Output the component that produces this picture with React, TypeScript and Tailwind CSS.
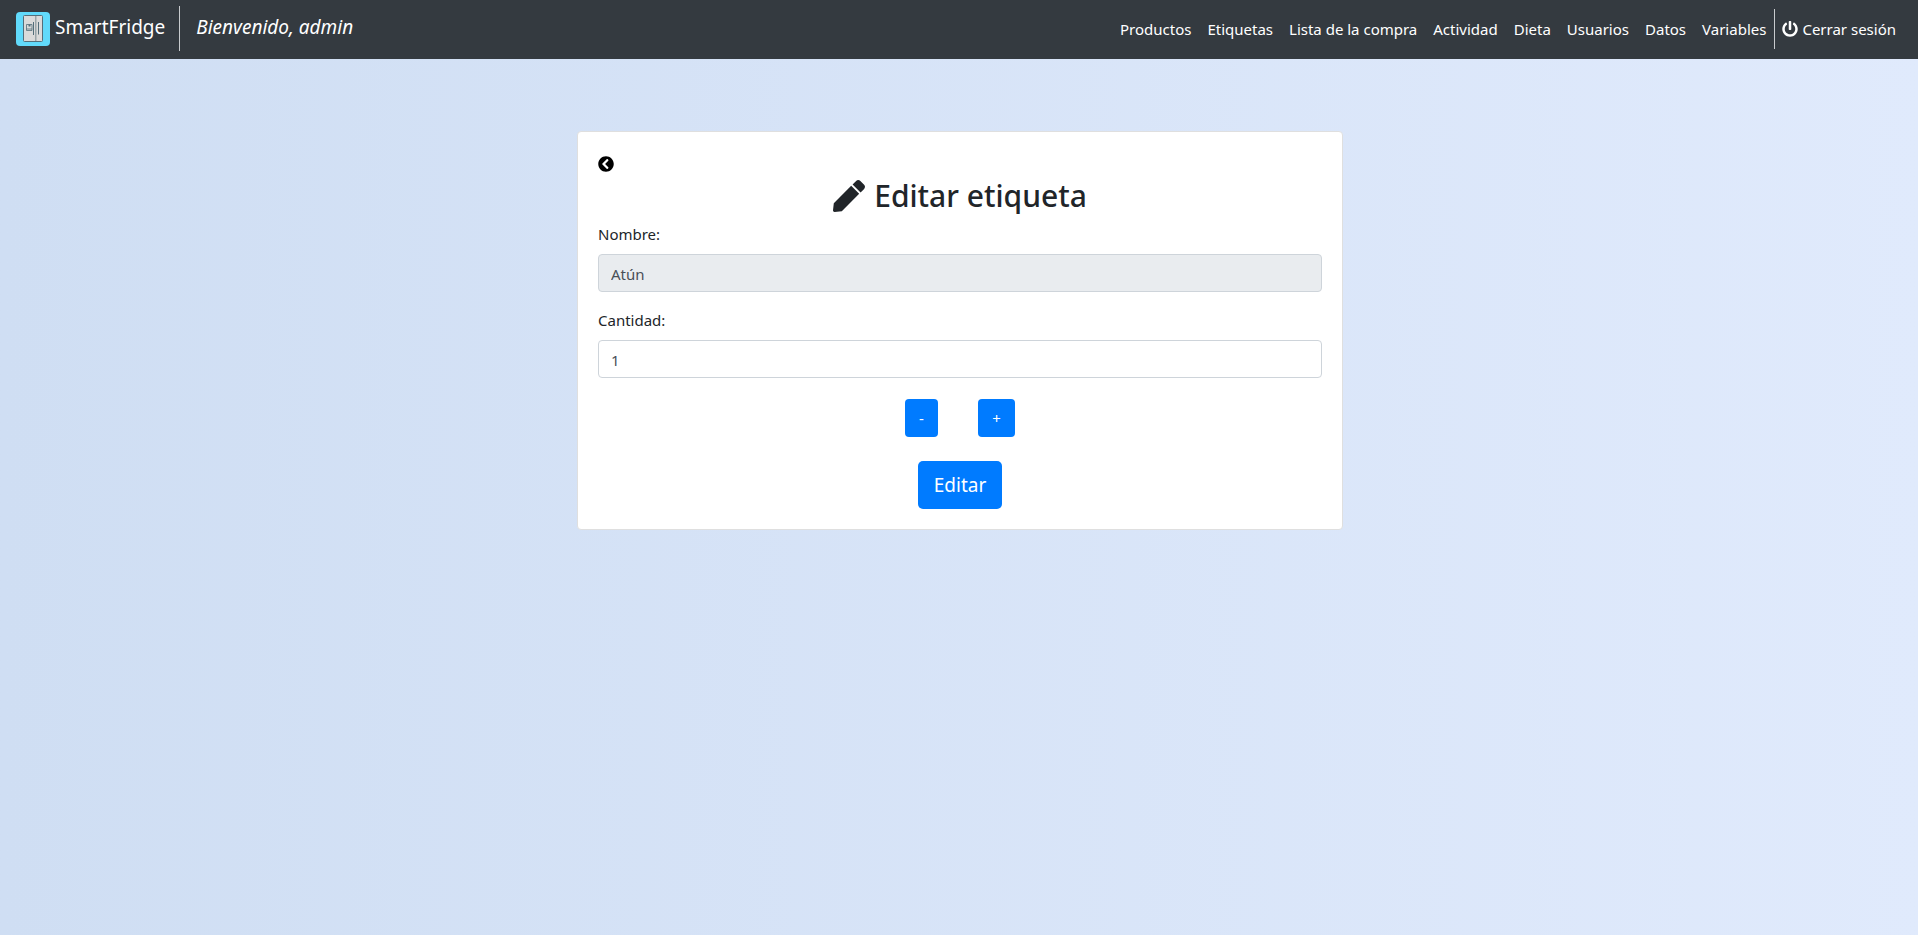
import { useState } from "react";
import { FaChevronCircleLeft, FaPen, FaPowerOff } from "react-icons/fa";

const links = [
  "Productos",
  "Etiquetas",
  "Lista de la compra",
  "Actividad",
  "Dieta",
  "Usuarios",
  "Datos",
  "Variables",
];

function FridgeLogo() {
  return (
    <svg viewBox="0 0 34 34" className="size-[34px] shrink-0" aria-hidden="true">
      <rect width="34" height="34" rx="4" fill="#61dafb" />
      <rect x="7.5" y="3.5" width="19" height="26" rx="1" fill="#dadada" stroke="#546e7a" strokeWidth="1" />
      <rect x="19" y="4" width="1.500" height="25" fill="#9aa5a9" />
      <path d="M17.500 10v13M22.500 10v12.500" stroke="#546e7a" strokeWidth="1" fill="none" />
      <path d="M10.500 12.500h5.500v6h-5.500zM10.500 17h5.500" stroke="#546e7a" strokeWidth="0.800" fill="none" />
      <rect x="12.500" y="12.500" width="2" height="2" fill="#546e7a" />
    </svg>
  );
}

function Navbar() {
  return (
    <nav className="flex min-h-[59px] flex-wrap items-center justify-between bg-[#343a40] pr-3.5 pl-4 text-white">
      <div className="flex items-center pb-0.5">
        <a href="#" className="flex items-center gap-[5px] pr-3.5 text-[19px] leading-[30px]">
          <FridgeLogo />
          <span className="pb-1">SmartFridge</span>
        </a>
        <span className="border-l border-[#c8cbce] pt-[6px] pb-[9px] pl-4 text-[19px] leading-[30px] italic">
          Bienvenido, admin
        </span>
      </div>
      <ul className="flex flex-wrap items-center pb-0.5 text-[15px] leading-6">
        {links.map((label) => (
          <li key={label}>
            <a href="#" className="block p-2">
              {label}
            </a>
          </li>
        ))}
        <li className="border-l border-[#c8cbce]">
          <a href="#" className="flex items-center gap-1 py-2 pr-2 pl-[7px]">
            <FaPowerOff className="size-4" />
            Cerrar sesión
          </a>
        </li>
      </ul>
    </nav>
  );
}

export default function App() {
  const [quantity, setQuantity] = useState(1);
  const field = "h-[38px] w-full rounded border border-[#ced4da] px-3 pt-0.5 text-[#495057]";

  return (
    <div className="min-h-screen bg-linear-to-r from-[#cfdef3] to-[#e0eafc] font-['Noto_Sans',sans-serif] text-[15px] leading-6 text-[#212529]">
      <Navbar />
      <main className="flex justify-center pt-[72px] pl-0.5">
        <form
          className="flex w-full max-w-[766px] flex-col rounded border border-[#dfdfdf] bg-white p-5"
          onSubmit={(event) => event.preventDefault()}
        >
          <a href="#" aria-label="Volver" className="flex h-6 items-center self-start text-black">
            <FaChevronCircleLeft className="size-4" />
          </a>
          <h1 className="mb-1.5 flex items-center justify-center gap-[9px] text-[30px] leading-10 font-medium">
            <FaPen className="size-8" />
            Editar etiqueta
          </h1>
          <label htmlFor="name" className="mb-2">
            Nombre:
          </label>
          <input id="name" type="text" defaultValue="Atún" disabled className={`${field} bg-[#e9ecef]`} />
          <label htmlFor="quantity" className="mt-4 mb-2">
            Cantidad:
          </label>
          <input
            id="quantity"
            type="text"
            inputMode="numeric"
            value={quantity}
            onChange={(event) => setQuantity(Number(event.target.value) || 0)}
            className={`${field} bg-white`}
          />
          <div className="mt-[21px] flex justify-center gap-10">
            <button
              type="button"
              className="h-[38px] w-[33px] rounded bg-[#007bff] text-white"
              onClick={() => setQuantity(quantity - 1)}
            >
              -
            </button>
            <button
              type="button"
              className="h-[38px] w-[37px] rounded bg-[#007bff] text-white"
              onClick={() => setQuantity(quantity + 1)}
            >
              +
            </button>
          </div>
          <button
            type="submit"
            className="mt-6 h-12 self-center rounded-[5px] bg-[#007bff] px-4 text-[19px] text-white"
          >
            Editar
          </button>
        </form>
      </main>
    </div>
  );
}
